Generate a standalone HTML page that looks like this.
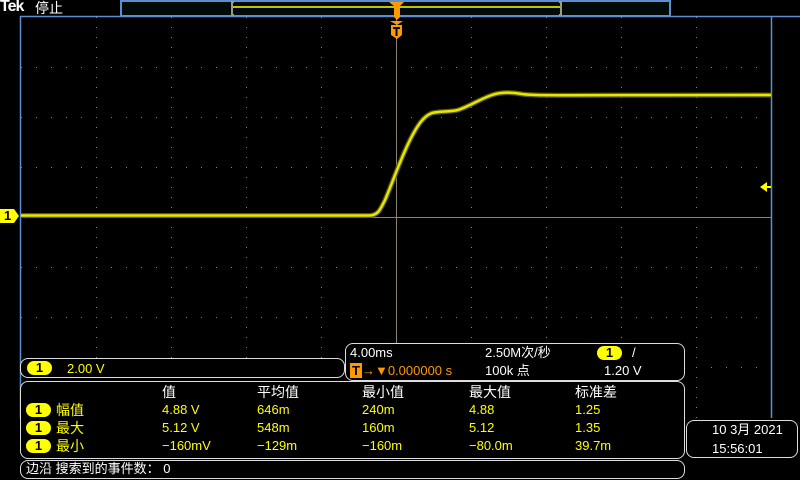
<!DOCTYPE html>
<html><head><meta charset="utf-8"><style>
body{margin:0;width:800px;height:480px;background:#000;overflow:hidden;position:relative;font-family:"Liberation Sans","Noto Sans CJK SC",sans-serif;color:#fff}
.a{position:absolute;white-space:nowrap;font-size:13px;line-height:16px}
.y{color:#ffff00}.o{color:#ff9900}
.box{position:absolute;border:1.5px solid #ddd;border-radius:8px;box-sizing:border-box;background:#000}
.b{position:absolute;background:#ffff00;color:#000;border-radius:8px;width:25px;height:14px;font-size:13px;line-height:14px;text-align:center;font-weight:bold}
</style></head><body>
<svg width="800" height="480" style="position:absolute;left:0;top:0">
<rect x="121" y="1" width="549" height="15" fill="#000a08" stroke="#5b8fd0" stroke-width="2"/>
<line x1="232" y1="7" x2="561" y2="7" stroke="#ffff00" stroke-width="1.5"/>
<path d="M234,2 h-2 v13 h2 M559,2 h2 v13 h-2" stroke="#a09a80" stroke-width="2" fill="none"/>
<line x1="20" y1="16.5" x2="800" y2="16.5" stroke="#5b8fd0" stroke-width="1.5"/>
<line x1="20.5" y1="16" x2="20.5" y2="418" stroke="#5b8fd0" stroke-width="1.5"/>
<line x1="771.5" y1="16" x2="771.5" y2="418" stroke="#5b8fd0" stroke-width="1.5"/>
<g stroke="#8a8270" stroke-width="1" stroke-dasharray="1 9">
<line x1="96.5" y1="17" x2="96.5" y2="418"/><line x1="171.5" y1="17" x2="171.5" y2="418"/><line x1="246.5" y1="17" x2="246.5" y2="418"/><line x1="321.5" y1="17" x2="321.5" y2="418"/>
<line x1="471.5" y1="17" x2="471.5" y2="418"/><line x1="546.5" y1="17" x2="546.5" y2="418"/><line x1="621.5" y1="17" x2="621.5" y2="418"/><line x1="696.5" y1="17" x2="696.5" y2="418"/>
</g>
<g stroke="#8a8270" stroke-width="1" stroke-dasharray="1 14">
<line x1="21" y1="67.5" x2="771" y2="67.5"/><line x1="21" y1="117.5" x2="771" y2="117.5"/><line x1="21" y1="167.5" x2="771" y2="167.5"/>
<line x1="21" y1="267.5" x2="771" y2="267.5"/><line x1="21" y1="317.5" x2="771" y2="317.5"/><line x1="21" y1="367.5" x2="771" y2="367.5"/>
</g>
<line x1="21" y1="217.5" x2="771" y2="217.5" stroke="#8a8270" stroke-width="1"/>
<line x1="396.5" y1="17" x2="396.5" y2="418" stroke="#8a8270" stroke-width="1"/>
<path d="M21,215.5 L370,215.5 C378,215 380,210 385,200 C392,184 400,160 410,140 C418,124 424,116 432,113 C440,111 450,112 458,110 C470,106 480,99 492,95 C500,92 512,92 522,94 C535,96 550,95 771,95" fill="none" stroke="#5a5a00" stroke-width="5"/>
<path d="M21,215.5 L370,215.5 C378,215 380,210 385,200 C392,184 400,160 410,140 C418,124 424,116 432,113 C440,111 450,112 458,110 C470,106 480,99 492,95 C500,92 512,92 522,94 C535,96 550,95 771,95" fill="none" stroke="#e6e600" stroke-width="2.5"/>
<path d="M389,2 h15 l-4,4 v11 l-3,3 l-3,-3 v-11 z" fill="#ff9900"/>
<path d="M390,21 h13 l-6,4 z" fill="#ff9900"/>
<path d="M391,25 h11 v10 l-5,4 l-6,-4 z" fill="#ff9900"/>
<path d="M393,28 h7 M396.5,28 v8" stroke="#000" stroke-width="2"/>
<path d="M760,187 l7,-5 v4 h4 v2 h-4 v4 z" fill="#ffff00"/>
<path d="M0,209 h14 l5,7 l-5,7 h-14 z" fill="#ffff00"/>
</svg>
<div class="a" style="left:0;top:-1px;font-size:16px;font-weight:bold;letter-spacing:-1px">Tek</div>
<div class="a" style="top:0;left:35px;font-size:14px">停止</div>
<div class="a" style="left:4px;top:208px;color:#000;font-weight:bold">1</div>

<div class="box" style="left:20px;top:358px;width:325px;height:20px"></div>
<div class="b" style="left:27px;top:361px">1</div>
<div class="a y" style="left:67px;top:361px">2.00 V</div>

<div class="box" style="left:345px;top:343px;width:340px;height:38px"></div>
<div class="a" style="left:350px;top:345px">4.00ms</div>
<div class="a" style="left:485px;top:345px">2.50M次/秒</div>
<div class="b" style="left:597px;top:346px">1</div>
<div class="a" style="left:632px;top:345px">/</div>
<div class="a o" style="left:350px;top:363px"><span style="background:#ff9900;color:#000;font-weight:bold;padding:0 2px">T</span>→▼0.000000 s</div>
<div class="a" style="left:485px;top:363px">100k 点</div>
<div class="a" style="left:604px;top:363px">1.20 V</div>

<div class="box" style="left:20px;top:381px;width:665px;height:78px"></div>
<div class="a" style="left:162px;top:384px;font-size:14px">值</div>
<div class="a" style="left:257px;top:384px;font-size:14px">平均值</div>
<div class="a" style="left:362px;top:384px;font-size:14px">最小值</div>
<div class="a" style="left:469px;top:384px;font-size:14px">最大值</div>
<div class="a" style="left:575px;top:384px;font-size:14px">标准差</div>
<div class="b" style="left:26px;top:403px">1</div><div class="a y" style="left:56px;top:402px;font-size:14px">幅值</div>
<div class="b" style="left:26px;top:421px">1</div><div class="a y" style="left:56px;top:420px;font-size:14px">最大</div>
<div class="b" style="left:26px;top:439px">1</div><div class="a y" style="left:56px;top:438px;font-size:14px">最小</div>
<div class="a y" style="left:162px;top:402px">4.88 V</div><div class="a y" style="left:257px;top:402px">646m</div><div class="a y" style="left:362px;top:402px">240m</div><div class="a y" style="left:469px;top:402px">4.88</div><div class="a y" style="left:575px;top:402px">1.25</div>
<div class="a y" style="left:162px;top:420px">5.12 V</div><div class="a y" style="left:257px;top:420px">548m</div><div class="a y" style="left:362px;top:420px">160m</div><div class="a y" style="left:469px;top:420px">5.12</div><div class="a y" style="left:575px;top:420px">1.35</div>
<div class="a y" style="left:162px;top:438px">−160mV</div><div class="a y" style="left:257px;top:438px">−129m</div><div class="a y" style="left:362px;top:438px">−160m</div><div class="a y" style="left:469px;top:438px">−80.0m</div><div class="a y" style="left:575px;top:438px">39.7m</div>

<div class="box" style="left:20px;top:460px;width:665px;height:19px"></div>
<div class="a" style="left:26px;top:461px">边沿 搜索到的事件数： 0</div>

<div class="box" style="left:686px;top:420px;width:112px;height:38px"></div>
<div class="a" style="left:712px;top:422px">10 3月 2021</div>
<div class="a" style="left:712px;top:441px">15:56:01</div>
</body></html>
